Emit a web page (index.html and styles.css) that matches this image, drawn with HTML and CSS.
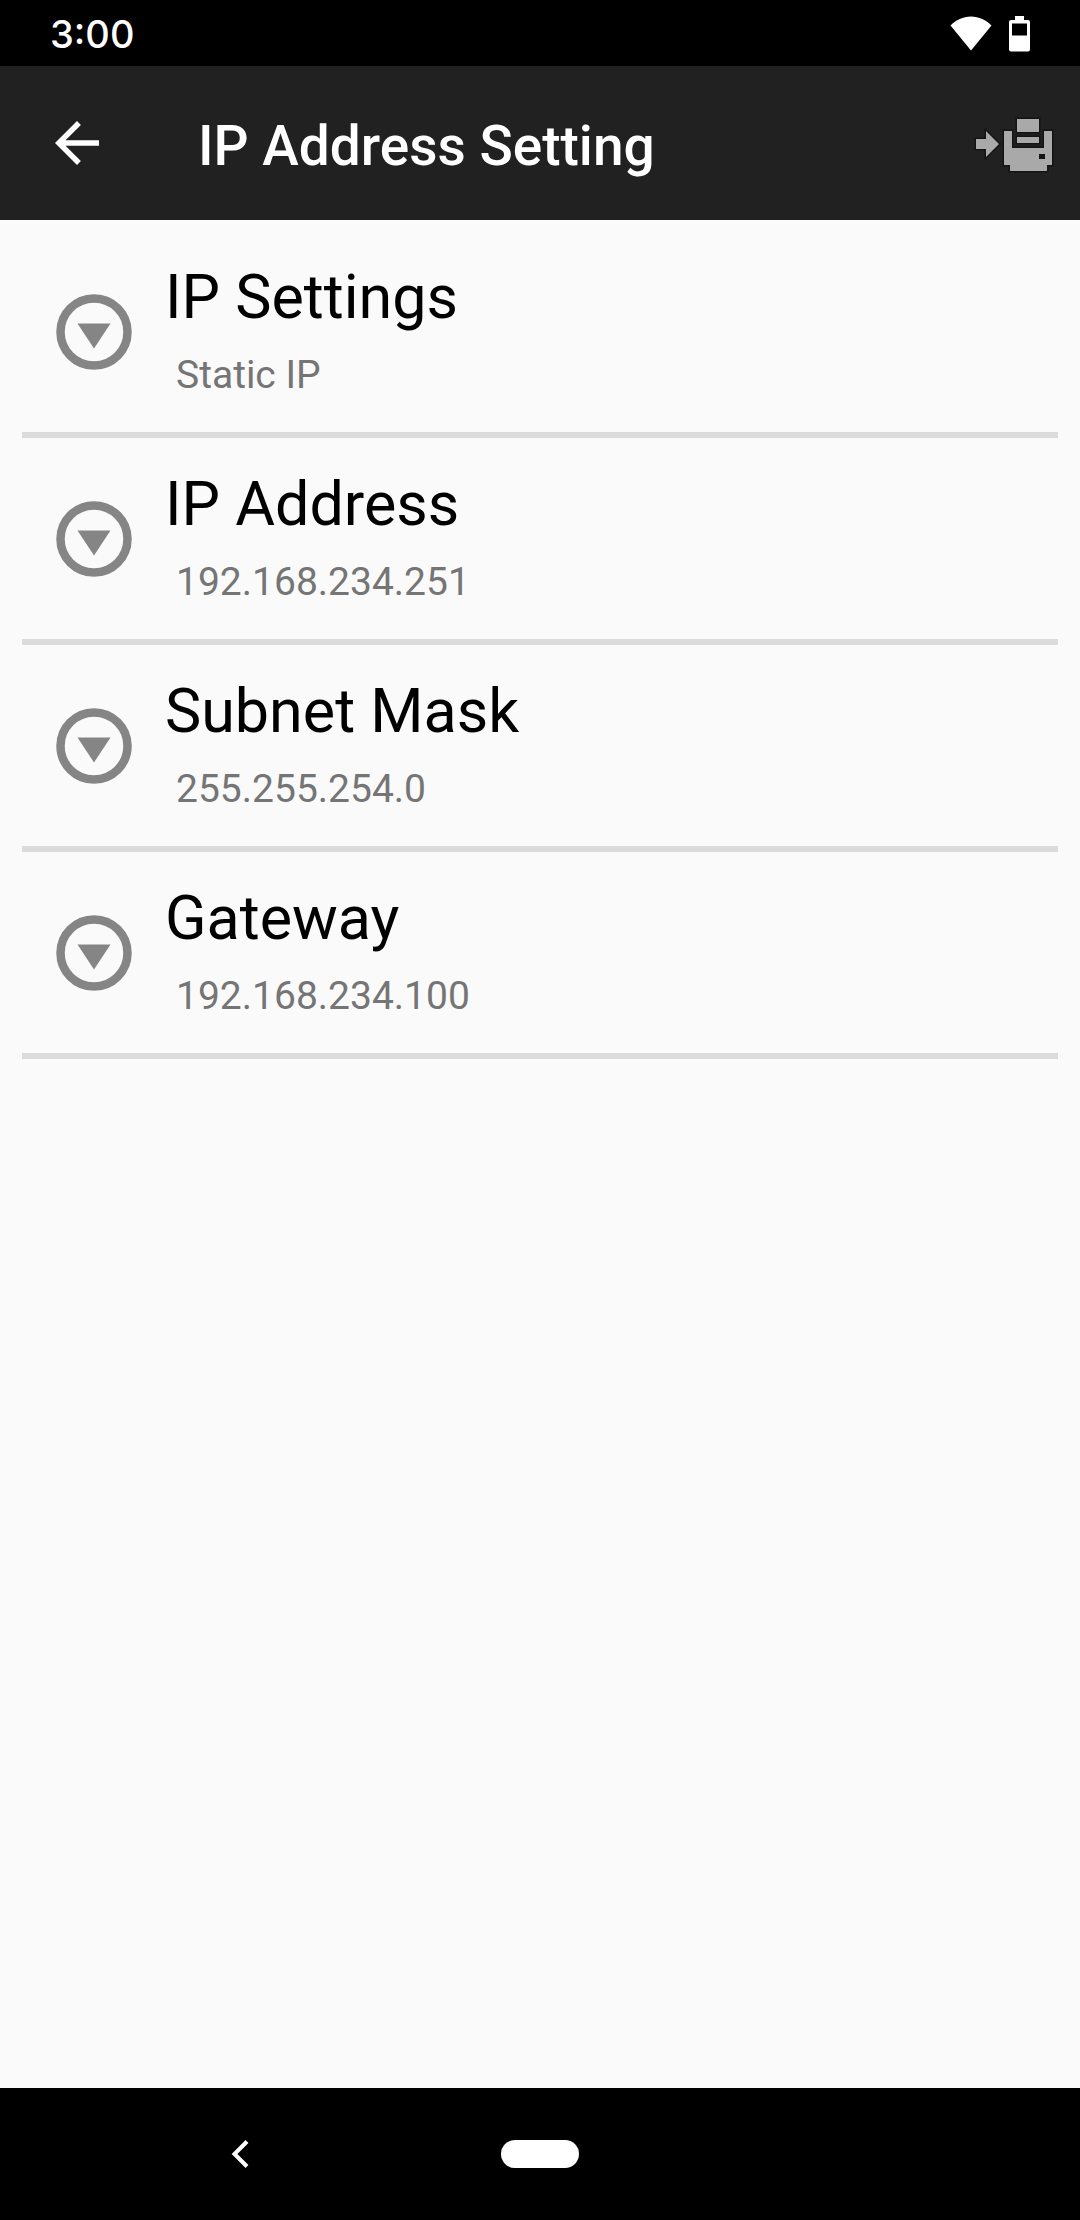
FILE: index.html
```html
<!DOCTYPE html>
<html lang="en">
<head>
    <meta charset="UTF-8">
    <meta name="viewport" content="width=device-width, initial-scale=1.0">
    <title>IP Address Setting</title>
    <link rel="stylesheet" href="styles.css">
</head>
<body>
    <div class="status-bar">
        <span class="clock">3:00</span>
        <div class="status-icons">
            <svg width="42" height="36" viewBox="0 0 42 36" fill="#fff">
                <path d="M21 34.500L.5 9.500C6 4 13 .5 21 .5s15 3.500 20.500 9z"/>
            </svg>
            <svg width="21" height="36" viewBox="0 0 21 36" fill="#fff" fill-rule="evenodd">
                <path d="M6 0h9v4h4a2 2 0 0 1 2 2v27.500a2 2 0 0 1-2 2H2a2 2 0 0 1-2-2V6a2 2 0 0 1 2-2h4zM3 7.500v12h15v-12z"/>
            </svg>
        </div>
    </div>

    <header class="app-bar">
        <button type="button" class="icon-button" aria-label="Back">
            <svg width="66" height="66" viewBox="0 0 24 24" fill="#fff">
                <path d="M20 11H7.830l5.590-5.590L12 4l-8 8 8 8 1.410-1.410L7.830 13H20v-2z"/>
            </svg>
        </button>
        <h1>IP Address Setting</h1>
        <button type="button" class="icon-button" aria-label="Send to printer">
            <svg width="80" height="62" viewBox="0 -4 80 62" fill="#a9a9a9" stroke="#141414" stroke-width="3" paint-order="stroke">
                <path d="M2 23h10v-8l13 13-13 13v-8H2z"/>
                <path d="M43 3h22v13H43z"/>
                <path d="M30 15h8v17h32V15h8v34h-5v6H36v-6h-6z"/>
                <path d="M43 21h22v6H43z"/>
                <path d="M65 38h6v5h-6z" fill="#141414" stroke="none"/>
            </svg>
        </button>
    </header>

    <main>
        <ul class="settings">
            <li>
                <button type="button" class="setting">
                    <svg class="setting-icon" viewBox="0 0 76 76">
                        <circle cx="38" cy="38" r="33.500" fill="none" stroke="#858585" stroke-width="8.500"/>
                        <path d="M21.500 29.500h33l-16.500 25z" fill="#858585"/>
                    </svg>
                    <span class="setting-text">
                        <span class="setting-name">IP Settings</span>
                        <span class="setting-value">Static IP</span>
                    </span>
                </button>
            </li>
            <li>
                <button type="button" class="setting">
                    <svg class="setting-icon" viewBox="0 0 76 76">
                        <circle cx="38" cy="38" r="33.500" fill="none" stroke="#858585" stroke-width="8.500"/>
                        <path d="M21.500 29.500h33l-16.500 25z" fill="#858585"/>
                    </svg>
                    <span class="setting-text">
                        <span class="setting-name">IP Address</span>
                        <span class="setting-value">192.168.234.251</span>
                    </span>
                </button>
            </li>
            <li>
                <button type="button" class="setting">
                    <svg class="setting-icon" viewBox="0 0 76 76">
                        <circle cx="38" cy="38" r="33.500" fill="none" stroke="#858585" stroke-width="8.500"/>
                        <path d="M21.500 29.500h33l-16.500 25z" fill="#858585"/>
                    </svg>
                    <span class="setting-text">
                        <span class="setting-name">Subnet Mask</span>
                        <span class="setting-value">255.255.254.0</span>
                    </span>
                </button>
            </li>
            <li>
                <button type="button" class="setting">
                    <svg class="setting-icon" viewBox="0 0 76 76">
                        <circle cx="38" cy="38" r="33.500" fill="none" stroke="#858585" stroke-width="8.500"/>
                        <path d="M21.500 29.500h33l-16.500 25z" fill="#858585"/>
                    </svg>
                    <span class="setting-text">
                        <span class="setting-name">Gateway</span>
                        <span class="setting-value">192.168.234.100</span>
                    </span>
                </button>
            </li>
        </ul>
    </main>

    <nav class="nav-bar">
        <button type="button" class="nav-back" aria-label="Back">
            <svg width="18" height="28" viewBox="0 0 18 28" fill="none" stroke="#fff" stroke-width="4">
                <path d="M16 1.500L3.500 14 16 26.500"/>
            </svg>
        </button>
        <button type="button" class="nav-home" aria-label="Home"></button>
    </nav>
</body>
</html>
```
FILE: styles.css
```css
* {
    box-sizing: border-box;
}
body {
    margin: 0;
    min-height: 100vh;
    display: flex;
    flex-direction: column;
    background-color: #fafafa;
    font-family: Roboto, sans-serif;
}
button {
    padding: 0;
    border: none;
    background: none;
    font-family: inherit;
    cursor: pointer;
}
svg {
    display: block;
}

/* status bar */
.status-bar {
    display: flex;
    justify-content: space-between;
    align-items: center;
    height: 66px;
    padding: 2px 50px 0;
    background-color: #000;
    color: #fff;
}
.clock {
    font-family: Inter, sans-serif;
    font-size: 38px;
    font-weight: 500;
}
.status-icons {
    display: flex;
    gap: 17px;
}

/* app bar */
.app-bar {
    display: flex;
    align-items: center;
    height: 154px;
    padding: 0 26px 0 44px;
    background-color: #212121;
}
.app-bar h1 {
    flex: 1;
    margin: 0;
    padding: 6px 0 0 88px;
    color: #fff;
    font-size: 55px;
    font-weight: 500;
    line-height: 64px;
}

/* settings list */
main {
    flex: 1;
    padding: 11px 22px;
}
.settings {
    margin: 0;
    padding: 0;
    list-style: none;
}
.settings li {
    border-bottom: 6px solid #dbdbdb;
}
.setting {
    display: flex;
    align-items: center;
    gap: 33px;
    width: 100%;
    padding: 22px 33px 22px 34px;
    text-align: left;
}
.setting-icon {
    flex: none;
    width: 76px;
    height: 76px;
}
.setting-name {
    display: block;
    color: #000;
    font-size: 61px;
    line-height: 88px;
}
.setting-value {
    display: block;
    padding-left: 11px;
    color: #757575;
    font-size: 39px;
    line-height: 69px;
}

/* navigation bar */
.nav-bar {
    display: grid;
    grid-template-columns: 220px 1fr 220px;
    align-items: center;
    height: 132px;
    padding: 0 130px;
    background-color: #000;
}
.nav-back,
.nav-home {
    justify-self: center;
}
.nav-home {
    width: 78px;
    height: 28px;
    border-radius: 14px;
    background-color: #fff;
}
```
